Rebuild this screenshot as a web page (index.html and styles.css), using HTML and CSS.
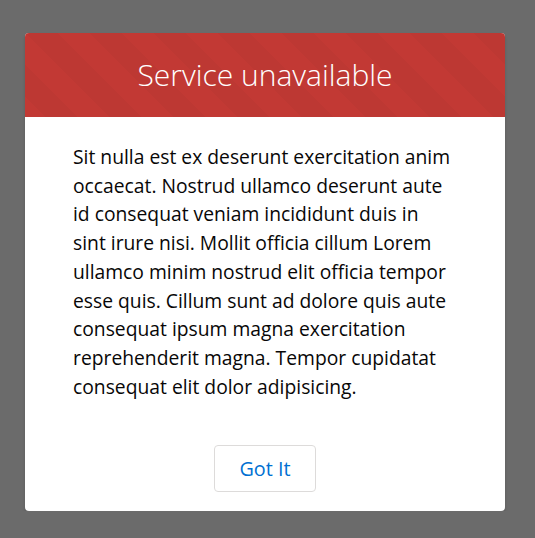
FILE: index.html
```html
<!DOCTYPE html>
<html>
<head>
<meta charset="utf-8">
<link rel="stylesheet" href="styles.css">
</head>
<body>
<section class="modal">
  <header class="modal-header">
    <h2 class="modal-title">Service unavailable</h2>
  </header>
  <div class="modal-content">
    <p>Sit nulla est ex deserunt exercitation anim occaecat. Nostrud ullamco deserunt aute id consequat veniam incididunt duis in sint irure nisi. Mollit officia cillum Lorem ullamco minim nostrud elit officia tempor esse quis. Cillum sunt ad dolore quis aute consequat ipsum magna exercitation reprehenderit magna. Tempor cupidatat consequat elit dolor adipisicing.</p>
  </div>
  <footer class="modal-footer">
    <button class="btn">Got It</button>
  </footer>
</section>
</body>
</html>
```
FILE: styles.css
```css
html, body {
  margin: 0;
  padding: 0;
  background: #6b6b6b;
}
body {
  font-family: "Open Sans", sans-serif;
  padding: 33px 30px 0 25px;
}
.modal {
  width: 480px;
  background: #fff;
  border-radius: 4px;
  box-shadow: 0 2px 3px rgba(0,0,0,0.16);
  overflow: hidden;
}
.modal-header {
  height: 84px;
  display: flex;
  align-items: center;
  justify-content: center;
  background-color: #c23934;
  background-image: linear-gradient(45deg, rgba(0,0,0,0.025) 25%, transparent 25%, transparent 50%, rgba(0,0,0,0.025) 50%, rgba(0,0,0,0.025) 75%, transparent 75%, transparent);
  background-size: 64px 64px;
}
.modal-title {
  margin: 0;
  color: #fff;
  font-weight: 300;
  font-size: 30px;
  line-height: 1.2;
}
.modal-content {
  padding: 26px 52px 0 48px;
}
.modal-content p {
  margin: 0;
  font-size: 19.3px;
  line-height: 28.7px;
  color: #080707;
}
.modal-footer {
  display: flex;
  justify-content: center;
  padding: 44px 0 19px;
}
.btn {
  width: 102px;
  height: 47px;
  background: #fff;
  border: 1px solid #dddbda;
  border-radius: 4px;
  color: #0070d2;
  font-family: inherit;
  font-size: 19.8px;
  padding: 0;
  cursor: pointer;
}
```
